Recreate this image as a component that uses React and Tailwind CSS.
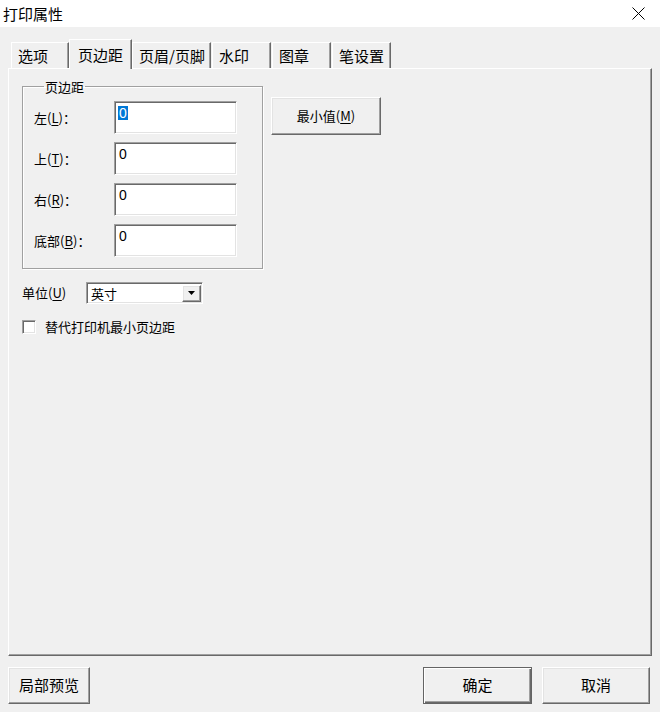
import React, { useState } from 'react'

const raised =
  'border border-t-white border-l-white border-r-[#696969] border-b-[#696969] shadow-[inset_-1px_-1px_0_#a0a0a0,inset_1px_1px_0_#e3e3e3]'
const sunken =
  'border border-t-[#a0a0a0] border-l-[#a0a0a0] border-r-white border-b-white shadow-[inset_1px_1px_0_#696969,inset_-1px_-1px_0_#e3e3e3]'

const tabs = ['选项', '页边距', '页眉/页脚', '水印', '图章', '笔设置']
const tabWidths = ['w-[58px]', 'w-[63px]', 'w-[79px]', 'w-[59px] ml-px', 'w-[59px] ml-px', 'w-[59px] ml-px']

function Hot({ k }) {
  return (
    <span>
      (<span className="underline underline-offset-2">{k}</span>)
    </span>
  )
}

function MarginRow({ label, k, value, selected }) {
  return (
    <div className="flex items-center h-[33px]">
      <div className="w-[80px] text-[13px] text-black">
        {label}
        <Hot k={k} />：
      </div>
      <div className={`w-[123px] h-[33px] bg-white pl-[3px] pt-[3px] text-[14px] leading-[14px] ${sunken}`}>
        <span
          className={`inline-block font-['Liberation_Sans',sans-serif] text-[14px] leading-[14px] px-px ${
            selected ? 'bg-[#0078d7] text-white' : 'text-black'
          }`}
        >
          {value}
        </span>
      </div>
    </div>
  )
}

function App() {
  const [active, setActive] = useState(1)
  const [checked, setChecked] = useState(false)

  return (
    <div className="w-[660px] h-[712px] bg-[#f0f0f0] flex flex-col font-['Noto_Sans_CJK_SC',sans-serif] text-black select-none">
      {/* title bar */}
      <div className="h-[27px] bg-white flex items-center justify-between pl-[3px] pr-[15px]">
        <span className="text-[15px] leading-none">打印属性</span>
        <svg width="13" height="13" viewBox="0 0 13 13">
          <path d="M0.5 0.5 L12.5 12.5 M12.5 0.5 L0.5 12.5" stroke="#000" strokeWidth="1" />
        </svg>
      </div>

      {/* tab strip */}
      <div className="flex items-end pl-[11px] pt-[12px] h-[41px] relative z-10">
        {tabs.map((t, i) => {
          const on = i === active
          return (
            <button
              key={t}
              onClick={() => setActive(i)}
              className={`${tabWidths[i]} ${
                on ? 'h-[30px] -mb-px pl-[8px]' : 'h-[26px] pl-[6px]'
              } flex items-center text-[15px] leading-none border-t border-l border-t-white border-l-white border-r border-r-[#696969] shadow-[inset_-1px_0_0_#a0a0a0] bg-[#f0f0f0]`}
            >
              {t}
            </button>
          )
        })}
      </div>

      {/* tab panel */}
      <div className={`mx-[8px] h-[588px] pl-[13px] pt-[10px] ${raised} shadow-[inset_-1px_-1px_0_#a0a0a0]`}>
        <div className="flex items-start gap-[8px]">
          <fieldset className="w-[241px] h-[190px] border border-[#a0a0a0] shadow-[inset_1px_1px_0_#fff,1px_1px_0_#fff] px-[11px] pt-[7px]">
            <legend className="ml-[10px] px-px text-[13px] leading-[15px]">页边距</legend>
            <div className="flex flex-col gap-[8px]">
              <MarginRow label="左" k="L" value="0" selected />
              <MarginRow label="上" k="T" value="0" />
              <MarginRow label="右" k="R" value="0" />
              <MarginRow label="底部" k="B" value="0" />
            </div>
          </fieldset>
          <button className={`mt-[18px] w-[110px] h-[38px] text-[13px] ${raised}`}>
            最小值<Hot k="M" />
          </button>
        </div>

        <div className="flex items-center mt-[13px] h-[22px]">
          <span className="w-[64px] text-[13px]">
            单位<Hot k="U" />
          </span>
          <div className={`w-[117px] h-[22px] bg-white flex items-center justify-between pl-[4px] pr-[1px] ${sunken}`}>
            <span className="text-[13px] leading-none">英寸</span>
            <div className={`w-[19px] h-[17px] flex items-center justify-center bg-[#f0f0f0] ${raised}`}>
              <svg width="7" height="4" viewBox="0 0 7 4">
                <path d="M0 0 H7 L3.5 4 Z" fill="#000" />
              </svg>
            </div>
          </div>
        </div>

        <label className="flex items-center mt-[13px] gap-[9px] cursor-default">
          <span
            onClick={() => setChecked(!checked)}
            className={`w-[14px] h-[14px] bg-white ${sunken} flex items-center justify-center`}
          >
            {checked && (
              <svg width="9" height="8" viewBox="0 0 9 8">
                <path d="M1 4 L3.5 6.5 L8 1" stroke="#000" strokeWidth="1.5" fill="none" />
              </svg>
            )}
          </span>
          <span className="text-[13px]">替代打印机最小页边距</span>
        </label>
      </div>

      {/* bottom buttons */}
      <div className="flex justify-between pl-[8px] pr-[10px] mt-[11px]">
        <button className={`w-[82px] h-[37px] text-[15px] ${raised}`}>局部预览</button>
        <div className="flex gap-[10px]">
          <button className="w-[109px] h-[37px] text-[15px] border border-[#646464] shadow-[inset_1px_1px_0_#fff,inset_-1px_-1px_0_#696969,inset_-2px_-2px_0_#a0a0a0]">
            确定
          </button>
          <button className={`w-[108px] h-[37px] text-[15px] ${raised}`}>取消</button>
        </div>
      </div>
    </div>
  )
}

export default App
